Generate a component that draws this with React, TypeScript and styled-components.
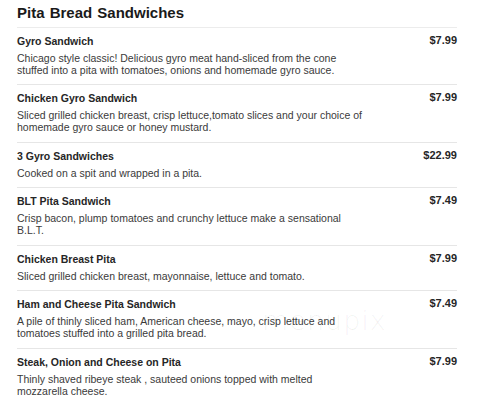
import React from "react";
import styled, { createGlobalStyle } from "styled-components";

const Global = createGlobalStyle`
  html, body { margin: 0; padding: 0; background: #ffffff; }
  body { font-family: "Liberation Sans", Arial, sans-serif; }
`;

const Page = styled.div`
  position: relative;
  width: 496px;
  height: 407px;
  overflow: hidden;
  padding: 0 39px 0 17px;
  box-sizing: border-box;
`;

const Title = styled.h1`
  margin: 0;
  padding-top: 4px;
  height: 22.5px;
  box-sizing: content-box;
  font-size: 15px;
  line-height: 18px;
  font-weight: bold;
  color: #1a1a1a;
  word-spacing: 1px;
  border-bottom: 1px solid #ececec;
`;

const List = styled.div`
  display: flex;
  flex-direction: column;
`;

const Item = styled.div`
  display: grid;
  grid-template-columns: 1fr auto;
  padding: 7px 0 8.5px;
  border-bottom: 1px solid #e6e6e6;
  &:last-child { border-bottom: none; }
`;

const Name = styled.div`
  font-size: 10.5px;
  line-height: 13px;
  font-weight: bold;
  color: #262626;
`;

const Price = styled.div`
  font-size: 11px;
  line-height: 13px;
  font-weight: bold;
  color: #262626;
  text-align: right;
  margin-top: -1px;
`;

const Desc = styled.div`
  grid-column: 1 / span 2;
  margin-top: 4px;
  font-size: 10.5px;
  line-height: 12px;
  color: #3a3a3a;
`;

const Line = styled.span`
  display: block;
  white-space: nowrap;
`;

const Watermark = styled.div`
  position: absolute;
  left: 262px;
  top: 305px;
  font-size: 27px;
  font-family: "DejaVu Sans", sans-serif;
  font-weight: 200;
  color: rgba(0, 0, 0, 0.06);
  letter-spacing: 1px;
  pointer-events: none;
`;

const items = [
  {
    name: "Gyro Sandwich",
    price: "$7.99",
    desc: [
      "Chicago style classic! Delicious gyro meat hand-sliced from the cone",
      "stuffed into a pita with tomatoes, onions and homemade gyro sauce.",
    ],
  },
  {
    name: "Chicken Gyro  Sandwich",
    price: "$7.99",
    desc: [
      "Sliced grilled chicken breast, crisp lettuce,tomato slices and your choice of",
      "homemade gyro sauce or honey mustard.",
    ],
  },
  {
    name: "3 Gyro Sandwiches",
    price: "$22.99",
    desc: ["Cooked on a spit and wrapped in a pita."],
  },
  {
    name: "BLT Pita Sandwich",
    price: "$7.49",
    desc: [
      "Crisp bacon, plump tomatoes and crunchy lettuce make a sensational",
      "B.L.T.",
    ],
  },
  {
    name: "Chicken Breast Pita",
    price: "$7.99",
    desc: ["Sliced grilled chicken breast, mayonnaise, lettuce and tomato."],
  },
  {
    name: "Ham and Cheese Pita Sandwich",
    price: "$7.49",
    desc: [
      "A pile of thinly sliced ham, American cheese, mayo, crisp lettuce and",
      "tomatoes stuffed into a grilled pita bread.",
    ],
  },
  {
    name: "Steak, Onion and Cheese on Pita",
    price: "$7.99",
    desc: [
      "Thinly shaved ribeye steak , sauteed onions topped with melted",
      "mozzarella cheese.",
    ],
  },
];

export default function App() {
  return (
    <>
      <Global />
      <Page>
        <Title>Pita Bread Sandwiches</Title>
        <List>
          {items.map((it) => (
            <Item key={it.name}>
              <Name>{it.name}</Name>
              <Price>{it.price}</Price>
              <Desc>
                {it.desc.map((l) => (
                  <Line key={l}>{l}</Line>
                ))}
              </Desc>
            </Item>
          ))}
        </List>
        <Watermark>menupix</Watermark>
      </Page>
    </>
  );
}
